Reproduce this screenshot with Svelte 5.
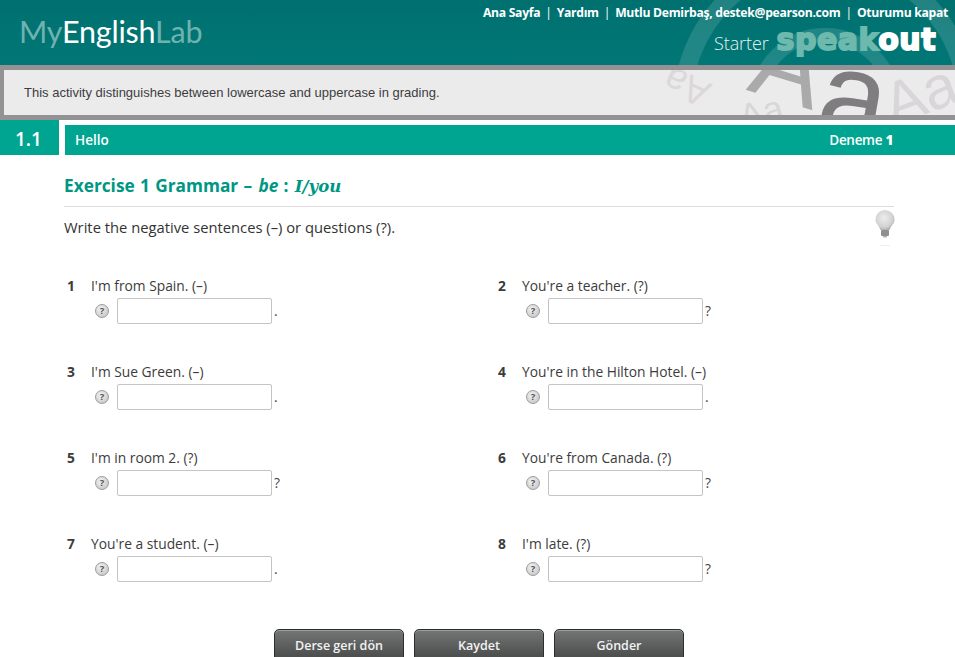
<script>
  const items = [
    { n: 1, text: "I'm from Spain. (–)", end: '.' },
    { n: 2, text: "You're a teacher. (?)", end: '?' },
    { n: 3, text: "I'm Sue Green. (–)", end: '.' },
    { n: 4, text: "You're in the Hilton Hotel. (–)", end: '.' },
    { n: 5, text: "I'm in room 2. (?)", end: '?' },
    { n: 6, text: "You're from Canada. (?)", end: '?' },
    { n: 7, text: "You're a student. (–)", end: '.' },
    { n: 8, text: "I'm late. (?)", end: '?' }
  ];
</script>

<div class="page">
  <header class="top">
    <svg class="rings" width="300" height="65" viewBox="0 0 300 65" aria-hidden="true">
      <circle cx="170" cy="103" r="142" fill="none" stroke="#fff" stroke-opacity=".13" stroke-width="18" />
      <circle cx="170" cy="103" r="68" fill="none" stroke="#fff" stroke-opacity=".13" stroke-width="14" />
    </svg>
    <div class="logo"><span class="dim">My</span>English<span class="dim">Lab</span></div>
    <div class="top-right">
      <nav class="links">
        <span>Ana Sayfa</span><i>|</i><span>Yardım</span><i>|</i><span>Mutlu Demirbaş, destek@pearson.com</span><i>|</i><span>Oturumu kapat</span>
      </nav>
      <div class="product">
        <span class="starter">Starter</span>
        <span class="brand"><span class="speak">speak</span>out</span>
      </div>
    </div>
  </header>

  <div class="notice">
    <p>This activity distinguishes between lowercase and uppercase in grading.</p>
    <svg class="letters" width="300" height="45" viewBox="0 0 300 45" aria-hidden="true">
      <g font-family="Liberation Sans, sans-serif">
        <text transform="translate(37 5) rotate(205)" font-size="38" fill="#dcd8da" text-anchor="middle">Aa</text>
        <text transform="translate(124 30) rotate(17)" font-size="105" fill="#aaaaaa" text-anchor="middle">A</text>
        <text transform="translate(192 67) rotate(10)" font-size="122" fill="#7f7d80" text-anchor="middle">a</text>
        <text transform="translate(238 56) rotate(-20)" font-size="60" fill="#d8d6d8">Aa</text>
        <text transform="translate(88 60) rotate(-15)" font-size="36" fill="#d8d6d8">Aa</text>
      </g>
    </svg>
  </div>

  <div class="section">
    <div class="num">1.1</div>
    <div class="bar">
      <span>Hello</span>
      <span class="try">Deneme <b>1</b></span>
    </div>
  </div>

  <main class="content">
    <h1>Exercise 1 Grammar – <em>be</em> : <em class="serif">I/you</em></h1>
    <div class="instr">
      <p>Write the negative sentences (–) or questions (?).</p>
      <svg class="bulb" width="24" height="38" viewBox="0 0 24 38" aria-hidden="true">
        <defs>
          <radialGradient id="g" cx=".45" cy=".4" r=".65">
            <stop offset="0" stop-color="#ececec" />
            <stop offset=".7" stop-color="#d2d2d2" />
            <stop offset="1" stop-color="#a4a4a4" />
          </radialGradient>
        </defs>
        <path d="M12 1a9.500 9.500 0 0 0-9.500 9.500c0 4 3.500 6 5 10.500h9c1.500-4.500 5-6.500 5-10.500A9.500 9.500 0 0 0 12 1z" fill="url(#g)" />
        <rect x="8" y="21" width="8" height="6" rx="1" fill="#8f8f8f" />
        <rect x="10" y="27" width="4" height="1.500" fill="#b5b5b5" />
        <rect x="7" y="36" width="10" height="1" fill="#eeeeee" />
      </svg>
    </div>

    <div class="grid">
      {#each items as it}
        <div class="item">
          <div class="q"><b>{it.n}</b><span>{it.text}</span></div>
          <div class="a">
            <span class="help">?</span>
            <input type="text" aria-label="Answer {it.n}" />
            <span class="end">{it.end}</span>
          </div>
        </div>
      {/each}
    </div>

    <div class="buttons">
      <button>Derse geri dön</button>
      <button>Kaydet</button>
      <button>Gönder</button>
    </div>
  </main>
</div>

<style>
  :global(body) {
    margin: 0;
    background: #fff;
    overflow: hidden;
  }
  .page {
    width: 955px;
    height: 657px;
    overflow: hidden;
    font-family: "Open Sans", sans-serif;
    color: #3c3c3c;
  }
  .top {
    position: relative;
    height: 65px;
    display: flex;
    justify-content: space-between;
    background: linear-gradient(#00706f 0%, #007776 100%);
    overflow: hidden;
  }
  .rings {
    position: absolute;
    left: 655px;
    top: 0;
  }
  .logo {
    position: relative;
    margin: 9px 0 0 19px;
    font-family: Lato, sans-serif;
    font-size: 30.500px;
    line-height: 44px;
    color: #fff;
    letter-spacing: -.2px;
  }
  .dim {
    color: #6fb3b0;
  }
  .top-right {
    position: relative;
    display: flex;
    flex-direction: column;
    align-items: flex-end;
    padding: 5px 7px 0 0;
  }
  .links {
    display: flex;
    font-size: 12.200px;
    font-weight: 700;
    line-height: 16px;
    color: #fff;
    letter-spacing: -.3px;
    white-space: nowrap;
  }
  .links i {
    font-style: normal;
    font-weight: 400;
    margin: 0 5px;
  }
  .product {
    display: flex;
    align-items: baseline;
    margin: 1px 12px 0 0;
    gap: 8px;
  }
  .starter {
    font-size: 18px;
    font-weight: 300;
    color: #e6f2f1;
    letter-spacing: -.1px;
  }
  .brand {
    font-family: "DejaVu Sans", sans-serif;
    font-weight: 700;
    font-size: 30px;
    line-height: 36px;
    color: #fff;
    -webkit-text-stroke: 1.800px currentColor;
    letter-spacing: .5px;
  }
  .speak {
    color: #6db9ad;
  }
  .notice {
    position: relative;
    box-sizing: border-box;
    height: 55px;
    border: 5px solid #949294;
    border-width: 5px 0;
    padding-left: 24px;
    background: #ecebec;
    overflow: hidden;
  }
  .notice::before {
    content: "";
    position: absolute;
    left: 0;
    top: 0;
    bottom: 0;
    width: 4px;
    background: #949294;
  }
  .notice p {
    position: relative;
    z-index: 1;
    margin: 0;
    font-family: "Liberation Sans", sans-serif;
    font-size: 13px;
    line-height: 46px;
    color: #3d3d3d;
  }
  .letters {
    position: absolute;
    left: 655px;
    top: 0;
  }
  .section {
    display: flex;
    height: 35px;
    gap: 6px;
  }
  .num {
    width: 59px;
    box-sizing: border-box;
    padding-left: 15px;
    background: #00a591;
    color: #fff;
    font-size: 19px;
    font-weight: 600;
    line-height: 38px;
  }
  .bar {
    flex: 1;
    margin-top: 5px;
    display: flex;
    justify-content: space-between;
    padding: 0 62px 0 10px;
    background: #00a591;
    color: #fff;
    font-size: 13.500px;
    font-weight: 600;
    line-height: 30px;
  }
  .try {
    letter-spacing: -.3px;
  }
  .try b {
    font-weight: 800;
  }
  .content {
    width: 830px;
    margin-left: 64px;
  }
  h1 {
    margin: 0;
    padding-top: 19px;
    height: 32px;
    border-bottom: 1px solid #dcdcdc;
    font-size: 17.300px;
    font-weight: 700;
    line-height: 24px;
    word-spacing: .8px;
    color: #009684;
  }
  h1 em {
    font-style: italic;
    margin-left: 1px;
  }
  h1 .serif {
    font-family: "DejaVu Serif", serif;
    font-size: 16.500px;
    margin-left: 1px;
  }
  .instr {
    position: relative;
    height: 69px;
  }
  .instr p {
    margin: 0;
    padding-top: 10px;
    font-size: 14.750px;
    line-height: 20px;
    color: #333;
  }
  .bulb {
    position: absolute;
    right: -3px;
    top: 2px;
  }
  .grid {
    display: grid;
    grid-template-columns: 431px 399px;
    grid-auto-rows: 86px;
  }
  .q {
    display: flex;
    font-size: 13.800px;
    line-height: 20px;
    color: #3c3c3c;
  }
  .q b {
    width: 27px;
    padding-left: 3px;
    box-sizing: border-box;
    font-weight: 700;
  }
  .a {
    display: flex;
    align-items: center;
    height: 26px;
    margin-top: 2px;
    padding-left: 31px;
  }
  .help {
    box-sizing: border-box;
    width: 14px;
    height: 14px;
    margin-right: 8px;
    border: 1px solid #9c9c9c;
    border-radius: 50%;
    background: radial-gradient(circle at 40% 35%, #f4f4f4, #bdbdbd);
    color: #555;
    font-size: 9.500px;
    font-weight: 700;
    line-height: 12px;
    text-align: center;
  }
  input {
    box-sizing: border-box;
    width: 155px;
    height: 26px;
    margin: 0;
    padding: 0 4px;
    border: 1px solid #c4c4c4;
    border-radius: 2px;
    background: #fff;
    outline: none;
  }
  .end {
    margin-left: 2px;
    margin-top: -2px;
    font-size: 13.800px;
    color: #444;
  }
  .buttons {
    display: flex;
    gap: 10px;
    margin-left: 210px;
    margin-top: 9px;
  }
  button {
    flex: none;
    width: 130px;
    height: 34px;
    padding: 0 0 1px;
    border: 1px solid #2e2e2e;
    border-radius: 5px 5px 0 0;
    background: linear-gradient(#747676, #454747);
    box-shadow: inset 0 1px 0 #9a9c9c;
    color: #f2f2f2;
    font-family: "Open Sans", sans-serif;
    font-size: 12.500px;
    font-weight: 600;
  }
</style>
